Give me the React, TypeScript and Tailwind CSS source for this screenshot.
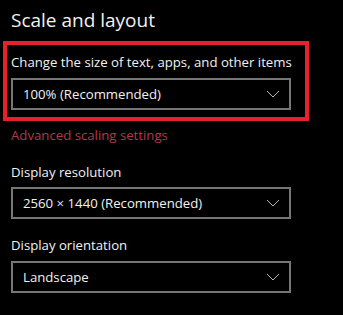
function Chevron() {
  return (
    <svg width="14" height="8" viewBox="0 0 14 8" fill="none" className="shrink-0">
      <path d="M1 1 L7 7 L13 1" stroke="#b4b4b4" strokeWidth="1" />
    </svg>
  );
}

function Dropdown({ value }: { value: string }) {
  return (
    <div className="flex h-[32px] w-[280px] items-center justify-between border-2 border-[#767676] pl-[10px] pr-[9px]">
      <span className="text-[13.2px] leading-[20px] text-[#f2f2f2]">{value}</span>
      <Chevron />
    </div>
  );
}

export default function App() {
  return (
    <div className="h-[315px] w-[343px] overflow-hidden bg-black font-['Open_Sans',sans-serif] text-[#f2f2f2]">
      <h1 className="pl-[11px] pt-[7px] text-[19px] leading-[26px]">Scale and layout</h1>
      <div className="ml-[3px] mt-[8px] w-[306px] border-4 border-[#e5212b] px-[4px] pb-[7px] pt-[7px]">
        <p className="text-[13.2px] leading-[20px]">Change the size of text, apps, and other items</p>
        <div className="mt-[6px]">
          <Dropdown value="100% (Recommended)" />
        </div>
      </div>
      <p className="pl-[11px] pt-[4px] text-[13.2px] leading-[20px] text-[#b23a4c]">Advanced scaling settings</p>
      <p className="mt-[17px] pl-[11px] text-[13.2px] leading-[20px]">Display resolution</p>
      <div className="mt-[5px] pl-[11px]">
        <Dropdown value="2560 × 1440 (Recommended)" />
      </div>
      <p className="mt-[16px] pl-[11px] text-[13.2px] leading-[20px]">Display orientation</p>
      <div className="mt-[6px] pl-[11px]">
        <Dropdown value="Landscape" />
      </div>
    </div>
  );
}
